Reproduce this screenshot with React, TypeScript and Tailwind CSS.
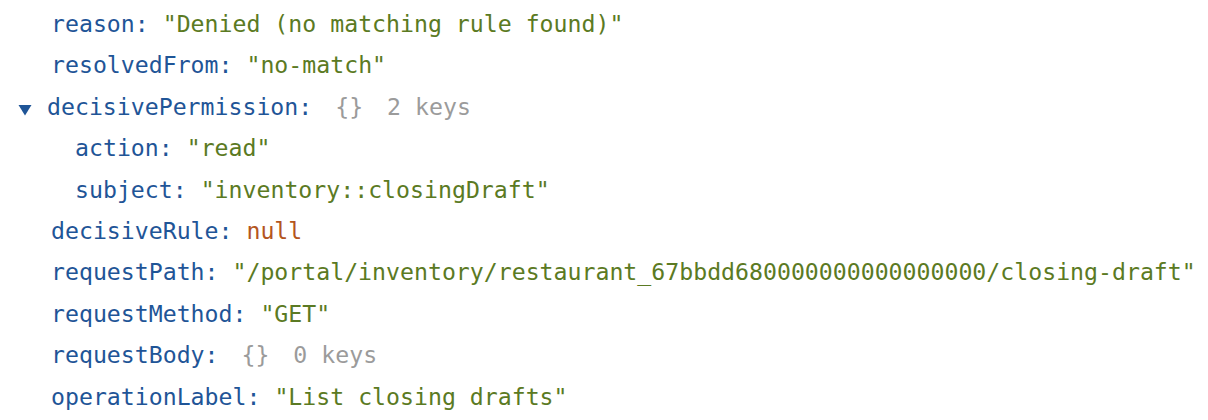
import React from "react";

const K = ({ children }: { children: React.ReactNode }) => (
  <span className="text-[#1f5597]">{children}</span>
);
const S = ({ children }: { children: React.ReactNode }) => (
  <span className="text-[#5b7a23]">{children}</span>
);

function Row({ indent, children }: { indent: string; children: React.ReactNode }) {
  return <div className={`h-[41.4px] whitespace-pre ${indent}`}>{children}</div>;
}

function Empty({ count }: { count: number }) {
  return (
    <span className="text-[#9b9b9b]">
      <span className="ml-[9px]">{"{}"}</span>
      <span className="ml-[10px]">{` ${count} keys`}</span>
    </span>
  );
}

export default function App() {
  return (
    <div
      className="w-[1208px] h-[420px] bg-white overflow-hidden pt-[3px] text-[23.2px] leading-[41.4px]"
      style={{ fontFamily: '"DejaVu Sans Mono", monospace' }}
    >
      <Row indent="pl-[51px]">
        <K>{"reason: "}</K>
        <S>"Denied (no matching rule found)"</S>
      </Row>
      <Row indent="pl-[51px]">
        <K>{"resolvedFrom: "}</K>
        <S>"no-match"</S>
      </Row>
      <Row indent="pl-[18px]">
        <svg width="14" height="12" viewBox="0 0 14 12" className="inline-block mr-[15px] align-[-1px]">
          <polygon points="0.5,1 13.5,1 7,11.5" fill="#1f5597" />
        </svg>
        <K>{"decisivePermission: "}</K>
        <Empty count={2} />
      </Row>
      <Row indent="pl-[75px]">
        <K>{"action: "}</K>
        <S>"read"</S>
      </Row>
      <Row indent="pl-[75px]">
        <K>{"subject: "}</K>
        <S>"inventory::closingDraft"</S>
      </Row>
      <Row indent="pl-[51px]">
        <K>{"decisiveRule: "}</K>
        <span className="text-[#b4561e]">null</span>
      </Row>
      <Row indent="pl-[51px]">
        <K>{"requestPath: "}</K>
        <S>"/portal/inventory/restaurant_67bbdd680000000000000000/closing-draft"</S>
      </Row>
      <Row indent="pl-[51px]">
        <K>{"requestMethod: "}</K>
        <S>"GET"</S>
      </Row>
      <Row indent="pl-[51px]">
        <K>{"requestBody: "}</K>
        <Empty count={0} />
      </Row>
      <Row indent="pl-[51px]">
        <K>{"operationLabel: "}</K>
        <S>"List closing drafts"</S>
      </Row>
    </div>
  );
}
